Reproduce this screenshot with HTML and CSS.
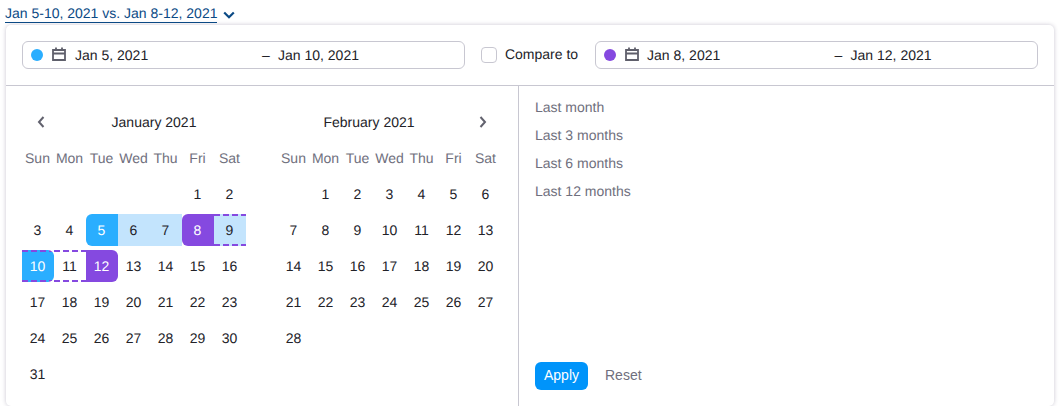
FILE: index.html
```html
<!DOCTYPE html>
<html lang="en">
<head>
    <meta charset="UTF-8">
    <title>Date range</title>
    <link rel="stylesheet" href="styles.css">
</head>
<body>
    <div class="trigger">
        <span class="trigger-label">Jan 5-10, 2021 vs. Jan 8-12, 2021</span>
        <svg class="trigger-arrow" width="12" height="8" viewBox="0 0 12 8"><path d="M1.2 1.5 6 6.2l4.8-4.7" fill="none" stroke="#0b4a85" stroke-width="2.2"/></svg>
    </div>
    <div class="popup">
        <div class="popup-head">
            <div class="range">
                <span class="dot dot-blue"></span>
                <svg class="cal-icon" width="14" height="14" viewBox="0 0 14 14"><path d="M1 3h12v10H1zM1 6.5h12M4 .5V3M10 .5V3" fill="none" stroke="#5f5f6b" stroke-width="1.8"/></svg>
                <span class="range-start">Jan 5, 2021</span>
                <span class="range-dash">–</span>
                <span>Jan 10, 2021</span>
            </div>
            <label class="compare"><span class="checkbox"></span>Compare to</label>
            <div class="range range-compare">
                <span class="dot dot-purple"></span>
                <svg class="cal-icon" width="14" height="14" viewBox="0 0 14 14"><path d="M1 3h12v10H1zM1 6.5h12M4 .5V3M10 .5V3" fill="none" stroke="#5f5f6b" stroke-width="1.8"/></svg>
                <span class="range-start">Jan 8, 2021</span>
                <span class="range-dash">–</span>
                <span>Jan 12, 2021</span>
            </div>
        </div>
        <div class="popup-body">
            <div class="calendars">
                <div class="month">
                    <div class="month-title month-title-first">
                        <svg class="nav-prev" width="8" height="12" viewBox="0 0 8 12"><path d="M6.5 1 2 6l4.5 5" fill="none" stroke="#62626e" stroke-width="2"/></svg>
                        <span>January 2021</span>
                    </div>
                    <span class="wd">Sun</span><span class="wd">Mon</span><span class="wd">Tue</span><span class="wd">Wed</span><span class="wd">Thu</span><span class="wd">Fri</span><span class="wd">Sat</span>
                    <span class="blank5"></span><span class="day">1</span><span class="day">2</span>
                    <span class="day">3</span><span class="day">4</span><span class="day start-a">5</span><span class="day in-a">6</span><span class="day in-a">7</span><span class="day start-b">8</span><span class="day in-a dashed">9</span>
                    <span class="day end-a dashed">10</span><span class="day dashed">11</span><span class="day end-b">12</span><span class="day">13</span><span class="day">14</span><span class="day">15</span><span class="day">16</span>
                    <span class="day">17</span><span class="day">18</span><span class="day">19</span><span class="day">20</span><span class="day">21</span><span class="day">22</span><span class="day">23</span>
                    <span class="day">24</span><span class="day">25</span><span class="day">26</span><span class="day">27</span><span class="day">28</span><span class="day">29</span><span class="day">30</span>
                    <span class="day">31</span>
                </div>
                <div class="month">
                    <div class="month-title month-title-second">
                        <span>February 2021</span>
                        <svg class="nav-next" width="8" height="12" viewBox="0 0 8 12"><path d="M1.5 1 6 6l-4.5 5" fill="none" stroke="#62626e" stroke-width="2"/></svg>
                    </div>
                    <span class="wd">Sun</span><span class="wd">Mon</span><span class="wd">Tue</span><span class="wd">Wed</span><span class="wd">Thu</span><span class="wd">Fri</span><span class="wd">Sat</span>
                    <span class="blank1"></span><span class="day">1</span><span class="day">2</span><span class="day">3</span><span class="day">4</span><span class="day">5</span><span class="day">6</span>
                    <span class="day">7</span><span class="day">8</span><span class="day">9</span><span class="day">10</span><span class="day">11</span><span class="day">12</span><span class="day">13</span>
                    <span class="day">14</span><span class="day">15</span><span class="day">16</span><span class="day">17</span><span class="day">18</span><span class="day">19</span><span class="day">20</span>
                    <span class="day">21</span><span class="day">22</span><span class="day">23</span><span class="day">24</span><span class="day">25</span><span class="day">26</span><span class="day">27</span>
                    <span class="day">28</span>
                </div>
            </div>
            <div class="side">
                <ul class="presets">
                    <li>Last month</li>
                    <li>Last 3 months</li>
                    <li>Last 6 months</li>
                    <li>Last 12 months</li>
                </ul>
                <div class="actions">
                    <button class="apply">Apply</button>
                    <button class="reset">Reset</button>
                </div>
            </div>
        </div>
    </div>
</body>
</html>
```

FILE: styles.css
```css
body {
    margin: 0;
    font-family: "Liberation Sans", Arial, sans-serif;
    font-size: 14px;
    color: #222228;
    background-color: #fff;
    text-rendering: geometricPrecision;
}
.trigger {
    display: flex;
    align-items: center;
    height: 25px;
    padding-left: 5px;
    color: #0b4a85;
}
.trigger-label {
    line-height: 17px;
    margin-top: 3px;
    border-bottom: 1px solid #0b4a85;
}
.trigger-arrow {
    margin: 4px 0 0 6px;
}
.popup {
    box-sizing: border-box;
    width: 1048px;
    height: 381px;
    margin-left: 6px;
    background-color: #fff;
    border-radius: 5px;
    box-shadow: 0 0 4px rgba(60, 50, 90, 0.28);
}
.popup-head {
    display: flex;
    align-items: center;
    height: 61px;
    box-sizing: border-box;
    padding: 0 16px 1px;
    border-bottom: 1px solid #c8c7d1;
}
.range {
    display: flex;
    align-items: center;
    box-sizing: border-box;
    width: 443px;
    height: 28px;
    padding-left: 8px;
    border: 1px solid #c8c7d1;
    border-radius: 6px;
}
.dot {
    width: 12px;
    height: 12px;
    border-radius: 50%;
}
.dot-blue {
    background-color: #2aaeff;
}
.dot-purple {
    background-color: #8549e0;
}
.cal-icon {
    margin: -2px 9px 0;
}
.range-start {
    width: 187px;
}
.range-dash {
    width: 16px;
}
.range-compare .cal-icon {
    margin-right: 8px;
}
.range-compare .range-start {
    width: 187.5px;
}
.compare {
    display: flex;
    align-items: center;
    margin: -2px 17px 0 16px;
}
.checkbox {
    box-sizing: border-box;
    width: 16px;
    height: 16px;
    margin: 3px 8px 0 0;
    border: 1px solid #c8c7d1;
    border-radius: 4px;
}
.popup-body {
    display: flex;
    height: 320px;
}
.calendars {
    display: flex;
    gap: 32px;
    width: 496px;
    padding: 20px 0 0 16px;
    border-right: 1px solid #c8c7d1;
}
.month {
    display: grid;
    grid-template-columns: repeat(7, 32px);
    grid-auto-rows: 32px;
    row-gap: 4px;
    align-items: center;
    text-align: center;
}
.month-title {
    grid-column: 1 / -1;
    display: flex;
    align-items: center;
}
.month-title span {
    flex: 1;
    text-align: center;
}
.month-title-first svg {
    margin: 0 17px 0 15px;
    width: 8px;
}
.month-title-second svg {
    margin: 0 15px 0 19px;
    width: 8px;
}
.wd {
    padding-right: 1px;
    color: #6f6f7d;
}
.blank5 {
    grid-column: span 5;
}
.blank1 {
    grid-column: span 1;
}
.day {
    box-sizing: border-box;
    display: flex;
    align-items: center;
    justify-content: center;
    height: 32px;
    padding-right: 1px;
}
.start-a {
    color: #fff;
    background-color: #2aaeff;
    border-radius: 6px 0 0 6px;
}
.in-a {
    background-color: #c3e4fd;
}
.start-b {
    color: #fff;
    background-color: #8549e0;
    border-radius: 6px 0 0 6px;
}
.end-a {
    color: #fff;
    background-color: #2aaeff;
    border-radius: 0 6px 6px 0;
}
.end-b {
    color: #fff;
    background-color: #8549e0;
    border-radius: 0 6px 6px 0;
}
.dashed {
    background-image: linear-gradient(to right, #8549e0 6px, transparent 6px), linear-gradient(to right, #8549e0 6px, transparent 6px);
    background-size: 9px 2px;
    background-position: 0 0, 0 100%;
    background-repeat: repeat-x;
}
.side {
    flex: 1;
    display: flex;
    flex-direction: column;
    justify-content: space-between;
    padding: 7px 16px 16px;
}
.presets {
    margin: 0;
    padding: 0;
    list-style: none;
    color: #6f6f7d;
}
.presets li {
    line-height: 28px;
}
.actions {
    display: flex;
    align-items: center;
}
.actions button {
    height: 28px;
    border: none;
    font: inherit;
    background: none;
    padding-bottom: 2px;
}
.apply {
    width: 53px;
    padding: 0;
    color: #fff;
    border-radius: 6px;
    background-color: #0094fa !important;
}
.reset {
    margin-left: 9px;
    padding: 0 8px;
    color: #6f6f7d;
}
```
